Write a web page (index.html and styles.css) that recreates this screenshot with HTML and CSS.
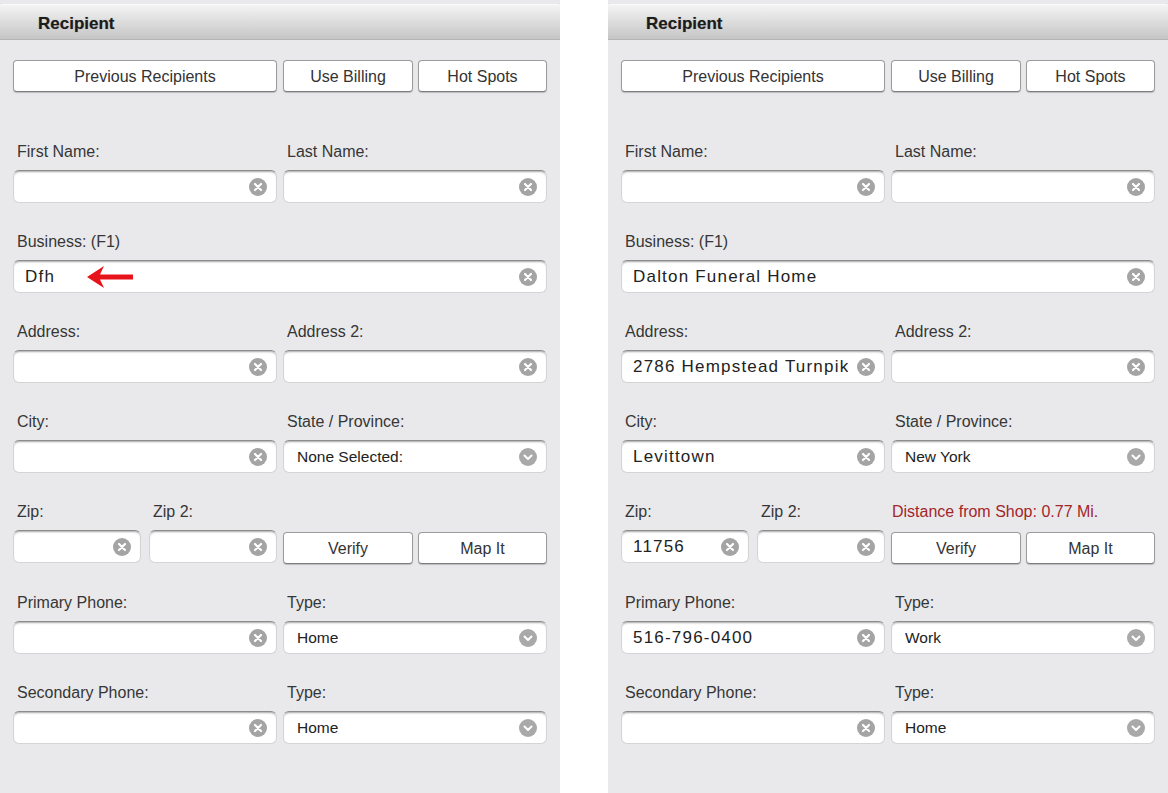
FILE: index.html
```html
<!DOCTYPE html>
<html lang="en">
<head>
    <meta charset="UTF-8">
    <title>Recipient</title>
    <link rel="stylesheet" href="styles.css">
</head>
<body>
<div class="page">

    <!-- left: empty form, business typed -->
    <section class="panel">
        <div class="panel-head">Recipient</div>
        <div class="top-btns">
            <button class="btn wide">Previous Recipients</button>
            <div class="half">
                <button class="btn">Use Billing</button>
                <button class="btn">Hot Spots</button>
            </div>
        </div>
        <div class="fields">
            <div class="row">
                <div class="field">
                    <div class="lbl">First Name:</div>
                    <div class="box"><input class="txt" value=""><svg class="ico" viewBox="0 0 18 18"><circle cx="9" cy="9" r="9" fill="#a4a4a4"/><path d="M6 6L12 12M12 6L6 12" stroke="#fff" stroke-width="2.2" stroke-linecap="round"/></svg></div>
                </div>
                <div class="field">
                    <div class="lbl">Last Name:</div>
                    <div class="box"><input class="txt" value=""><svg class="ico" viewBox="0 0 18 18"><circle cx="9" cy="9" r="9" fill="#a4a4a4"/><path d="M6 6L12 12M12 6L6 12" stroke="#fff" stroke-width="2.2" stroke-linecap="round"/></svg></div>
                </div>
            </div>
            <div class="row">
                <div class="field full">
                    <div class="lbl">Business: (F1)</div>
                    <div class="box"><input class="txt" value="Dfh"><svg class="ico" viewBox="0 0 18 18"><circle cx="9" cy="9" r="9" fill="#a4a4a4"/><path d="M6 6L12 12M12 6L6 12" stroke="#fff" stroke-width="2.2" stroke-linecap="round"/></svg>
                        <svg class="arrow" viewBox="0 0 46 24"><path d="M0 12L17 1L13 9.5H46V14.5H13L17 23Z" fill="#e8141b"/></svg>
                    </div>
                </div>
            </div>
            <div class="row">
                <div class="field">
                    <div class="lbl">Address:</div>
                    <div class="box"><input class="txt" value=""><svg class="ico" viewBox="0 0 18 18"><circle cx="9" cy="9" r="9" fill="#a4a4a4"/><path d="M6 6L12 12M12 6L6 12" stroke="#fff" stroke-width="2.2" stroke-linecap="round"/></svg></div>
                </div>
                <div class="field">
                    <div class="lbl">Address 2:</div>
                    <div class="box"><input class="txt" value=""><svg class="ico" viewBox="0 0 18 18"><circle cx="9" cy="9" r="9" fill="#a4a4a4"/><path d="M6 6L12 12M12 6L6 12" stroke="#fff" stroke-width="2.2" stroke-linecap="round"/></svg></div>
                </div>
            </div>
            <div class="row">
                <div class="field">
                    <div class="lbl">City:</div>
                    <div class="box"><input class="txt" value=""><svg class="ico" viewBox="0 0 18 18"><circle cx="9" cy="9" r="9" fill="#a4a4a4"/><path d="M6 6L12 12M12 6L6 12" stroke="#fff" stroke-width="2.2" stroke-linecap="round"/></svg></div>
                </div>
                <div class="field">
                    <div class="lbl">State / Province:</div>
                    <div class="box"><select class="sel"><option>None Selected:</option></select><svg class="ico" viewBox="0 0 18 18"><circle cx="9" cy="9" r="9" fill="#a9a9a9"/><path d="M5.5 7.5L9 11L12.5 7.5" fill="none" stroke="#fff" stroke-width="2" stroke-linecap="round" stroke-linejoin="round"/></svg></div>
                </div>
            </div>
            <div class="row">
                <div class="pair">
                    <div class="field small">
                        <div class="lbl">Zip:</div>
                        <div class="box"><input class="txt" value=""><svg class="ico" viewBox="0 0 18 18"><circle cx="9" cy="9" r="9" fill="#a4a4a4"/><path d="M6 6L12 12M12 6L6 12" stroke="#fff" stroke-width="2.2" stroke-linecap="round"/></svg></div>
                    </div>
                    <div class="field small">
                        <div class="lbl">Zip 2:</div>
                        <div class="box"><input class="txt" value=""><svg class="ico" viewBox="0 0 18 18"><circle cx="9" cy="9" r="9" fill="#a4a4a4"/><path d="M6 6L12 12M12 6L6 12" stroke="#fff" stroke-width="2.2" stroke-linecap="round"/></svg></div>
                    </div>
                </div>
                <div class="field">
                    <div class="lbl dist"></div>
                    <div class="half low">
                        <button class="btn">Verify</button>
                        <button class="btn">Map It</button>
                    </div>
                </div>
            </div>
            <div class="row">
                <div class="field">
                    <div class="lbl">Primary Phone:</div>
                    <div class="box"><input class="txt" value=""><svg class="ico" viewBox="0 0 18 18"><circle cx="9" cy="9" r="9" fill="#a4a4a4"/><path d="M6 6L12 12M12 6L6 12" stroke="#fff" stroke-width="2.2" stroke-linecap="round"/></svg></div>
                </div>
                <div class="field">
                    <div class="lbl">Type:</div>
                    <div class="box"><select class="sel"><option>Home</option></select><svg class="ico" viewBox="0 0 18 18"><circle cx="9" cy="9" r="9" fill="#a9a9a9"/><path d="M5.5 7.5L9 11L12.5 7.5" fill="none" stroke="#fff" stroke-width="2" stroke-linecap="round" stroke-linejoin="round"/></svg></div>
                </div>
            </div>
            <div class="row">
                <div class="field">
                    <div class="lbl">Secondary Phone:</div>
                    <div class="box"><input class="txt" value=""><svg class="ico" viewBox="0 0 18 18"><circle cx="9" cy="9" r="9" fill="#a4a4a4"/><path d="M6 6L12 12M12 6L6 12" stroke="#fff" stroke-width="2.2" stroke-linecap="round"/></svg></div>
                </div>
                <div class="field">
                    <div class="lbl">Type:</div>
                    <div class="box"><select class="sel"><option>Home</option></select><svg class="ico" viewBox="0 0 18 18"><circle cx="9" cy="9" r="9" fill="#a9a9a9"/><path d="M5.5 7.5L9 11L12.5 7.5" fill="none" stroke="#fff" stroke-width="2" stroke-linecap="round" stroke-linejoin="round"/></svg></div>
                </div>
            </div>
        </div>
    </section>

    <!-- right: filled in from the hot spot -->
    <section class="panel">
        <div class="panel-head">Recipient</div>
        <div class="top-btns">
            <button class="btn wide">Previous Recipients</button>
            <div class="half">
                <button class="btn">Use Billing</button>
                <button class="btn">Hot Spots</button>
            </div>
        </div>
        <div class="fields">
            <div class="row">
                <div class="field">
                    <div class="lbl">First Name:</div>
                    <div class="box"><input class="txt" value=""><svg class="ico" viewBox="0 0 18 18"><circle cx="9" cy="9" r="9" fill="#a4a4a4"/><path d="M6 6L12 12M12 6L6 12" stroke="#fff" stroke-width="2.2" stroke-linecap="round"/></svg></div>
                </div>
                <div class="field">
                    <div class="lbl">Last Name:</div>
                    <div class="box"><input class="txt" value=""><svg class="ico" viewBox="0 0 18 18"><circle cx="9" cy="9" r="9" fill="#a4a4a4"/><path d="M6 6L12 12M12 6L6 12" stroke="#fff" stroke-width="2.2" stroke-linecap="round"/></svg></div>
                </div>
            </div>
            <div class="row">
                <div class="field full">
                    <div class="lbl">Business: (F1)</div>
                    <div class="box"><input class="txt" value="Dalton Funeral Home"><svg class="ico" viewBox="0 0 18 18"><circle cx="9" cy="9" r="9" fill="#a4a4a4"/><path d="M6 6L12 12M12 6L6 12" stroke="#fff" stroke-width="2.2" stroke-linecap="round"/></svg></div>
                </div>
            </div>
            <div class="row">
                <div class="field">
                    <div class="lbl">Address:</div>
                    <div class="box"><input class="txt" value="2786 Hempstead Turnpike"><svg class="ico" viewBox="0 0 18 18"><circle cx="9" cy="9" r="9" fill="#a4a4a4"/><path d="M6 6L12 12M12 6L6 12" stroke="#fff" stroke-width="2.2" stroke-linecap="round"/></svg></div>
                </div>
                <div class="field">
                    <div class="lbl">Address 2:</div>
                    <div class="box"><input class="txt" value=""><svg class="ico" viewBox="0 0 18 18"><circle cx="9" cy="9" r="9" fill="#a4a4a4"/><path d="M6 6L12 12M12 6L6 12" stroke="#fff" stroke-width="2.2" stroke-linecap="round"/></svg></div>
                </div>
            </div>
            <div class="row">
                <div class="field">
                    <div class="lbl">City:</div>
                    <div class="box"><input class="txt" value="Levittown"><svg class="ico" viewBox="0 0 18 18"><circle cx="9" cy="9" r="9" fill="#a4a4a4"/><path d="M6 6L12 12M12 6L6 12" stroke="#fff" stroke-width="2.2" stroke-linecap="round"/></svg></div>
                </div>
                <div class="field">
                    <div class="lbl">State / Province:</div>
                    <div class="box"><select class="sel"><option>New York</option></select><svg class="ico" viewBox="0 0 18 18"><circle cx="9" cy="9" r="9" fill="#a9a9a9"/><path d="M5.5 7.5L9 11L12.5 7.5" fill="none" stroke="#fff" stroke-width="2" stroke-linecap="round" stroke-linejoin="round"/></svg></div>
                </div>
            </div>
            <div class="row">
                <div class="pair">
                    <div class="field small">
                        <div class="lbl">Zip:</div>
                        <div class="box"><input class="txt" value="11756"><svg class="ico" viewBox="0 0 18 18"><circle cx="9" cy="9" r="9" fill="#a4a4a4"/><path d="M6 6L12 12M12 6L6 12" stroke="#fff" stroke-width="2.2" stroke-linecap="round"/></svg></div>
                    </div>
                    <div class="field small">
                        <div class="lbl">Zip 2:</div>
                        <div class="box"><input class="txt" value=""><svg class="ico" viewBox="0 0 18 18"><circle cx="9" cy="9" r="9" fill="#a4a4a4"/><path d="M6 6L12 12M12 6L6 12" stroke="#fff" stroke-width="2.2" stroke-linecap="round"/></svg></div>
                    </div>
                </div>
                <div class="field">
                    <div class="lbl dist">Distance from Shop: 0.77 Mi.</div>
                    <div class="half low">
                        <button class="btn">Verify</button>
                        <button class="btn">Map It</button>
                    </div>
                </div>
            </div>
            <div class="row">
                <div class="field">
                    <div class="lbl">Primary Phone:</div>
                    <div class="box"><input class="txt" value="516-796-0400"><svg class="ico" viewBox="0 0 18 18"><circle cx="9" cy="9" r="9" fill="#a4a4a4"/><path d="M6 6L12 12M12 6L6 12" stroke="#fff" stroke-width="2.2" stroke-linecap="round"/></svg></div>
                </div>
                <div class="field">
                    <div class="lbl">Type:</div>
                    <div class="box"><select class="sel"><option>Work</option></select><svg class="ico" viewBox="0 0 18 18"><circle cx="9" cy="9" r="9" fill="#a9a9a9"/><path d="M5.5 7.5L9 11L12.5 7.5" fill="none" stroke="#fff" stroke-width="2" stroke-linecap="round" stroke-linejoin="round"/></svg></div>
                </div>
            </div>
            <div class="row">
                <div class="field">
                    <div class="lbl">Secondary Phone:</div>
                    <div class="box"><input class="txt" value=""><svg class="ico" viewBox="0 0 18 18"><circle cx="9" cy="9" r="9" fill="#a4a4a4"/><path d="M6 6L12 12M12 6L6 12" stroke="#fff" stroke-width="2.2" stroke-linecap="round"/></svg></div>
                </div>
                <div class="field">
                    <div class="lbl">Type:</div>
                    <div class="box"><select class="sel"><option>Home</option></select><svg class="ico" viewBox="0 0 18 18"><circle cx="9" cy="9" r="9" fill="#a9a9a9"/><path d="M5.5 7.5L9 11L12.5 7.5" fill="none" stroke="#fff" stroke-width="2" stroke-linecap="round" stroke-linejoin="round"/></svg></div>
                </div>
            </div>
        </div>
    </section>

</div>
</body>
</html>
```

FILE: styles.css
```css
body {
    margin: 0;
    background: #fff;
    font-family: "Liberation Sans", Arial, sans-serif;
    color: #333;
}
.page {
    display: flex;
    gap: 48px;
}
.panel {
    width: 560px;
    height: 793px;
    box-sizing: border-box;
    padding-top: 4px;
    background: #e9e9eb;
    overflow: hidden;
}
.panel-head {
    height: 36px;
    line-height: 38px;
    padding-left: 38px;
    background: linear-gradient(#f4f4f4, #c5c5c5);
    border-top: 1px solid #fafafa;
    border-bottom: 1px solid #b5b5b5;
    box-sizing: border-box;
    border-radius: 3px 3px 0 0;
    font-size: 17px;
    font-weight: bold;
    color: #1c1c1c;
    text-shadow: 0 0 1px rgba(0, 0, 0, 0.35);
}
.top-btns {
    display: flex;
    gap: 6px;
    margin: 20px 13px 0;
}
.half {
    display: flex;
    gap: 5px;
    width: 264px;
}
.half.low {
    margin-top: 2px;
}
.btn {
    height: 32px;
    padding: 2px 0 0;
    background: #fff;
    border: 1px solid #9c9c9c;
    border-bottom-color: #7d7d7d;
    border-radius: 4px;
    box-shadow: 0 1px 1px rgba(0, 0, 0, 0.2);
    font-family: "Liberation Sans", Arial, sans-serif;
    font-size: 16px;
    color: #333;
}
.btn.wide {
    width: 264px;
}
.half .btn:first-child {
    width: 130px;
}
.half .btn:last-child {
    width: 129px;
}
.fields {
    display: flex;
    flex-direction: column;
    gap: 30px;
    margin: 51px 13px 0;
}
.row {
    display: flex;
    gap: 6px;
}
.pair {
    display: flex;
    gap: 8px;
    width: 264px;
}
.field {
    display: flex;
    flex-direction: column;
    gap: 9px;
    width: 264px;
}
.field.small {
    width: 128px;
}
.field.full {
    width: 534px;
}
.lbl {
    height: 18px;
    line-height: 18px;
    padding-left: 4px;
    font-size: 16px;
    color: #363636;
    white-space: nowrap;
}
.lbl.dist {
    padding-left: 1px;
    color: #a3262a;
}
.box {
    position: relative;
    height: 33px;
}
.txt,
.sel {
    width: 100%;
    height: 100%;
    box-sizing: border-box;
    margin: 0;
    padding: 0 36px 0 11px;
    background: #fff;
    border: 1px solid #d4d4d6;
    border-top-color: #8c8c8c;
    border-radius: 6px;
    box-shadow: inset 0 2px 2px -1px rgba(0, 0, 0, 0.35);
    font-family: "Liberation Sans", Arial, sans-serif;
    font-size: 17px;
    letter-spacing: 1.2px;
    color: #222;
    outline: none;
}
.sel {
    appearance: none;
    -webkit-appearance: none;
    padding-left: 13px;
    font-size: 15.5px;
    letter-spacing: 0;
}
.ico {
    position: absolute;
    right: 10px;
    top: 8px;
    width: 18px;
    height: 18px;
}
.arrow {
    position: absolute;
    left: 74px;
    top: 5px;
    width: 46px;
    height: 24px;
}
```
